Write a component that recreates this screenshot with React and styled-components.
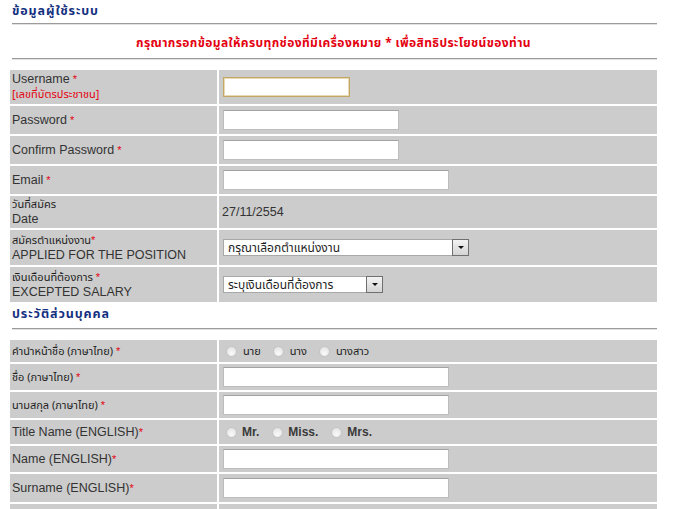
import React from 'react';
import styled, { createGlobalStyle } from 'styled-components';

const GlobalStyle = createGlobalStyle`
    body{
        margin: 0;
        background: #fff;
        font-family: Tahoma, "Noto Sans Thai", "Noto Sans", "Liberation Sans", sans-serif;
    }
`;

const Page = styled.div`
    width: 647px;
    padding-left: 10px;
`;

const SectionTitle = styled.div`
    padding: ${p => p.$top}px 2px ${p => p.$bottom}px;
    line-height: 18px;
    font-size: 12.5px;
    letter-spacing: 0.9px;
    font-weight: bold;
    color: #13307f;
`;

const Rule = styled.div`
    margin-left: 2px;
    border-top: 1px solid #9b9b9b;
    border-bottom: 1px solid #e2e2e2;
`;

const Notice = styled.div`
    padding: 9px 0 6px;
    line-height: 18px;
    text-align: center;
    font-size: 12px;
    letter-spacing: 0.4px;
    font-weight: bold;
    color: #e4000f;
`;

const Form = styled.div`
    display: flex;
    flex-direction: column;
    gap: 2px;
    margin-top: 10px;
`;

const Row = styled.div`
    display: grid;
    grid-template-columns: 207px 438px;
    gap: 2px;
    height: ${p => p.$h}px;
`;

const Label = styled.div`
    background: #cccccc;
    display: flex;
    flex-direction: column;
    justify-content: center;
    padding: 0 2px;
    color: #333;
    font-family: "Liberation Sans", Arial, sans-serif;
    font-size: 12.5px;
    line-height: 15px;
`;

const Thai = styled.span`
    font-family: Tahoma, "Noto Sans Thai", "Noto Sans", sans-serif;
    font-size: 11px;
    color: ${p => p.$red ? '#e4000f' : '#1e1e1e'};
`;

const Star = styled.span`
    color: #e4000f;
    margin-left: ${p => p.$tight ? 0 : 3}px;
    font-family: "Liberation Sans", Arial, sans-serif;
    font-size: 11px;
`;

const Value = styled.div`
    background: #cccccc;
    display: flex;
    align-items: center;
    padding-left: 4px;
    color: #333;
    font-family: "Liberation Sans", Arial, sans-serif;
    font-size: 12.5px;
`;

const DateText = styled.span`
    margin-left: -1px;
`;

const Input = styled.div`
    box-sizing: border-box;
    width: ${p => p.$w}px;
    height: 20px;
    background: #fff;
    border: 1px solid #bdbdbd;
    border-top-color: #a2a2a2;
    ${p => p.$focus && `
        border: 1px solid #c2a765;
        box-shadow: inset 0 0 0 1px #e6d9b3;
    `}
`;

const Select = styled.div`
    box-sizing: border-box;
    width: ${p => p.$w}px;
    height: 17px;
    background: #fff;
    border: 1px solid #a8a8a8;
    display: flex;
    align-items: center;
    justify-content: space-between;
    padding-left: 4px;
    font-family: Tahoma, "Noto Sans Thai", "Noto Sans", sans-serif;
    font-size: 12px;
    color: #1e1e1e;
`;

const DropButton = styled.span`
    box-sizing: border-box;
    width: 17px;
    height: 17px;
    margin: -1px -1px -1px 0;
    background: linear-gradient(#f3f3f3, #d4d4d4);
    border: 1px solid #6f6f6f;
    display: flex;
    align-items: center;
    justify-content: center;
    &::after{
        content: '';
        border-left: 3px solid transparent;
        border-right: 3px solid transparent;
        border-top: 3px solid #111;
    }
`;

const RadioGroup = styled.div`
    display: flex;
    align-items: center;
    padding-left: 3px;
`;

const Radio = styled.span`
    display: flex;
    align-items: center;
    margin-right: ${p => p.$gap}px;
    font-family: ${p => p.$thai ? 'Tahoma, "Noto Sans Thai", "Noto Sans", sans-serif' : '"Liberation Sans", Arial, sans-serif'};
    font-size: ${p => p.$thai ? 11 : 12}px;
    font-weight: ${p => p.$thai ? 'normal' : 'bold'};
    color: ${p => p.$thai ? '#1e1e1e' : '#3a3a3a'};
    &::before{
        content: '';
        box-sizing: border-box;
        width: 11px;
        height: 11px;
        margin-right: ${p => p.$thai ? 6 : 5}px;
        border-radius: 50%;
        border: 1px solid #c4c4c4;
        background: radial-gradient(circle at 50% 70%, #fafafa, #dedede);
    }
`;

function App() {
    return (
        <Page>
            <GlobalStyle />
            <SectionTitle $top={3} $bottom={2}>ข้อมูลผู้ใช้ระบบ</SectionTitle>
            <Rule />
            <Notice>กรุณากรอกข้อมูลให้ครบทุกช่องที่มีเครื่องหมาย * เพื่อสิทธิประโยชน์ของท่าน</Notice>
            <Rule />
            <Form>
                <Row $h={34}>
                    <Label>
                        <div>Username<Star>*</Star></div>
                        <Thai $red>[เลขที่บัตรประชาชน]</Thai>
                    </Label>
                    <Value><Input $w={127} $focus /></Value>
                </Row>
                <Row $h={28}>
                    <Label><div>Password<Star>*</Star></div></Label>
                    <Value><Input $w={176} /></Value>
                </Row>
                <Row $h={28}>
                    <Label><div>Confirm Password<Star>*</Star></div></Label>
                    <Value><Input $w={176} /></Value>
                </Row>
                <Row $h={28}>
                    <Label><div>Email<Star>*</Star></div></Label>
                    <Value><Input $w={226} /></Value>
                </Row>
                <Row $h={32}>
                    <Label>
                        <Thai>วันที่สมัคร</Thai>
                        <div>Date</div>
                    </Label>
                    <Value><DateText>27/11/2554</DateText></Value>
                </Row>
                <Row $h={35}>
                    <Label>
                        <div><Thai>สมัครตำแหน่งงาน</Thai><Star $tight>*</Star></div>
                        <div>APPLIED FOR THE POSITION</div>
                    </Label>
                    <Value>
                        <Select $w={246}>กรุณาเลือกตำแหน่งงาน<DropButton /></Select>
                    </Value>
                </Row>
                <Row $h={35}>
                    <Label>
                        <div><Thai>เงินเดือนที่ต้องการ</Thai><Star>*</Star></div>
                        <div>EXCEPTED SALARY</div>
                    </Label>
                    <Value>
                        <Select $w={160}>ระบุเงินเดือนที่ต้องการ<DropButton /></Select>
                    </Value>
                </Row>
            </Form>
            <SectionTitle $top={4} $bottom={4}>ประวัติส่วนบุคคล</SectionTitle>
            <Rule />
            <Form>
                <Row $h={22}>
                    <Label><div><Thai>คำนำหน้าชื่อ (ภาษาไทย)</Thai><Star>*</Star></div></Label>
                    <Value>
                        <RadioGroup>
                            <Radio $thai $gap={12}>นาย</Radio>
                            <Radio $thai $gap={12}>นาง</Radio>
                            <Radio $thai $gap={0}>นางสาว</Radio>
                        </RadioGroup>
                    </Value>
                </Row>
                <Row $h={26}>
                    <Label><div><Thai>ชื่อ (ภาษาไทย)</Thai><Star>*</Star></div></Label>
                    <Value><Input $w={226} /></Value>
                </Row>
                <Row $h={26}>
                    <Label><div><Thai>นามสกุล (ภาษาไทย)</Thai><Star>*</Star></div></Label>
                    <Value><Input $w={226} /></Value>
                </Row>
                <Row $h={24}>
                    <Label><div>Title Name (ENGLISH)<Star $tight>*</Star></div></Label>
                    <Value>
                        <RadioGroup>
                            <Radio $gap={13}>Mr.</Radio>
                            <Radio $gap={13}>Miss.</Radio>
                            <Radio $gap={0}>Mrs.</Radio>
                        </RadioGroup>
                    </Value>
                </Row>
                <Row $h={26}>
                    <Label><div>Name (ENGLISH)<Star $tight>*</Star></div></Label>
                    <Value><Input $w={226} /></Value>
                </Row>
                <Row $h={28}>
                    <Label><div>Surname (ENGLISH)<Star $tight>*</Star></div></Label>
                    <Value><Input $w={226} /></Value>
                </Row>
                <Row $h={28}>
                    <Label />
                    <Value />
                </Row>
            </Form>
        </Page>
    );
}

export default App;
